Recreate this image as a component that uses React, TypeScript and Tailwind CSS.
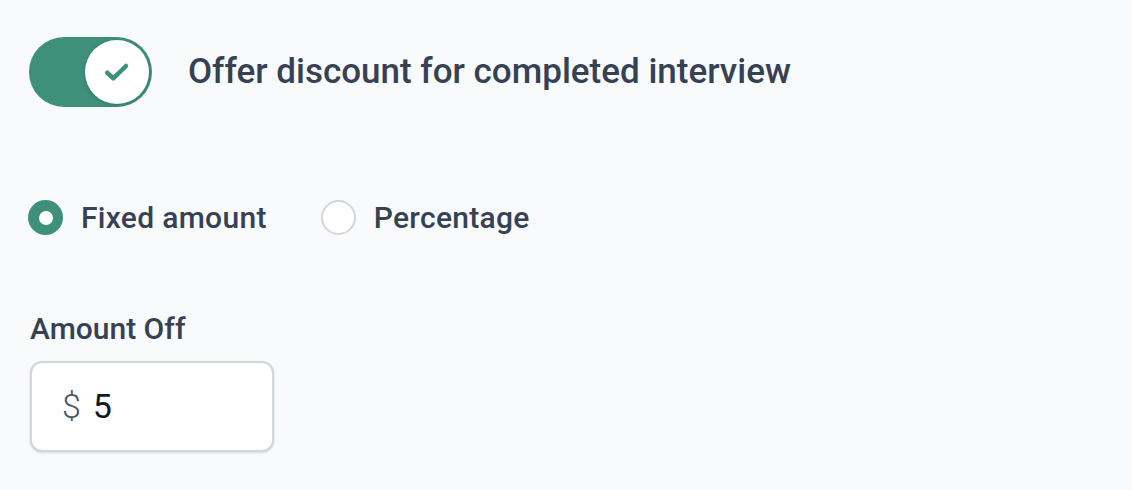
import { useState } from "react";

// ─── Toggle ───────────────────────────────────────────────────────────────────

function Toggle({ on, onChange }: { on: boolean; onChange: () => void }) {
  return (
    <button
      onClick={onChange}
      className={`flex items-center w-[123px] h-[70px] rounded-full p-[3px] shrink-0 ${on ? "bg-[#3e907b]" : "bg-gray-200"}`}
    >
      <span
        className={`flex items-center justify-center w-[64px] h-[64px] rounded-full bg-white shadow-[0_1px_4px_rgba(0,0,0,0.18)] ${on ? "ml-auto" : ""}`}
      >
        {on && (
          <svg width="36" height="36" viewBox="0 0 24 24" fill="none">
            <path
              d="M5.5 12.5l4 3.8L18 8"
              stroke="#3e907b"
              strokeWidth="3"
              strokeLinecap="round"
              strokeLinejoin="round"
            />
          </svg>
        )}
      </span>
    </button>
  );
}

// ─── Radio ────────────────────────────────────────────────────────────────────

function Radio({ label, checked, onClick }: { label: string; checked: boolean; onClick: () => void }) {
  return (
    <label onClick={onClick} className="flex items-center gap-[18px] cursor-pointer">
      <span
        className={`flex items-center justify-center w-[35px] h-[35px] rounded-full ${
          checked ? "bg-[#3e907b]" : "bg-white border-2 border-gray-300"
        }`}
      >
        {checked && <span className="w-[14px] h-[14px] rounded-full bg-white" />}
      </span>
      <span className="text-[30px] font-medium text-gray-700 tracking-[0.01em]">{label}</span>
    </label>
  );
}

// ─── Main ─────────────────────────────────────────────────────────────────────

export default function App() {
  const [on, setOn] = useState(true);
  const [mode, setMode] = useState<"fixed" | "percent">("fixed");

  return (
    <div className="w-[1132px] h-[490px] bg-gray-50 pl-[29px] pt-[37px]" style={{ fontFamily: "Roboto, sans-serif" }}>
      {/* Toggle row */}
      <div className="flex items-center gap-[36px]">
        <Toggle on={on} onChange={() => setOn(!on)} />
        <span className="text-[35px] font-medium text-gray-700">Offer discount for completed interview</span>
      </div>

      {/* Discount type */}
      <div className="flex items-center gap-[54px] mt-[88px] -ml-px">
        <Radio label="Fixed amount" checked={mode === "fixed"} onClick={() => setMode("fixed")} />
        <Radio label="Percentage" checked={mode === "percent"} onClick={() => setMode("percent")} />
      </div>

      {/* Amount */}
      <div className="mt-[74px] ml-px">
        <p className="text-[30px] font-medium text-gray-700 leading-none">Amount Off</p>
        <div className="flex items-center mt-[17px] w-[244px] h-[91px] rounded-[12px] border-2 border-gray-300 bg-white shadow-sm px-[30px]">
          <span className="text-[34px] font-light text-gray-600">$</span>
          <span className="text-[34px] text-gray-900 ml-[12px]">5</span>
        </div>
      </div>
    </div>
  );
}
